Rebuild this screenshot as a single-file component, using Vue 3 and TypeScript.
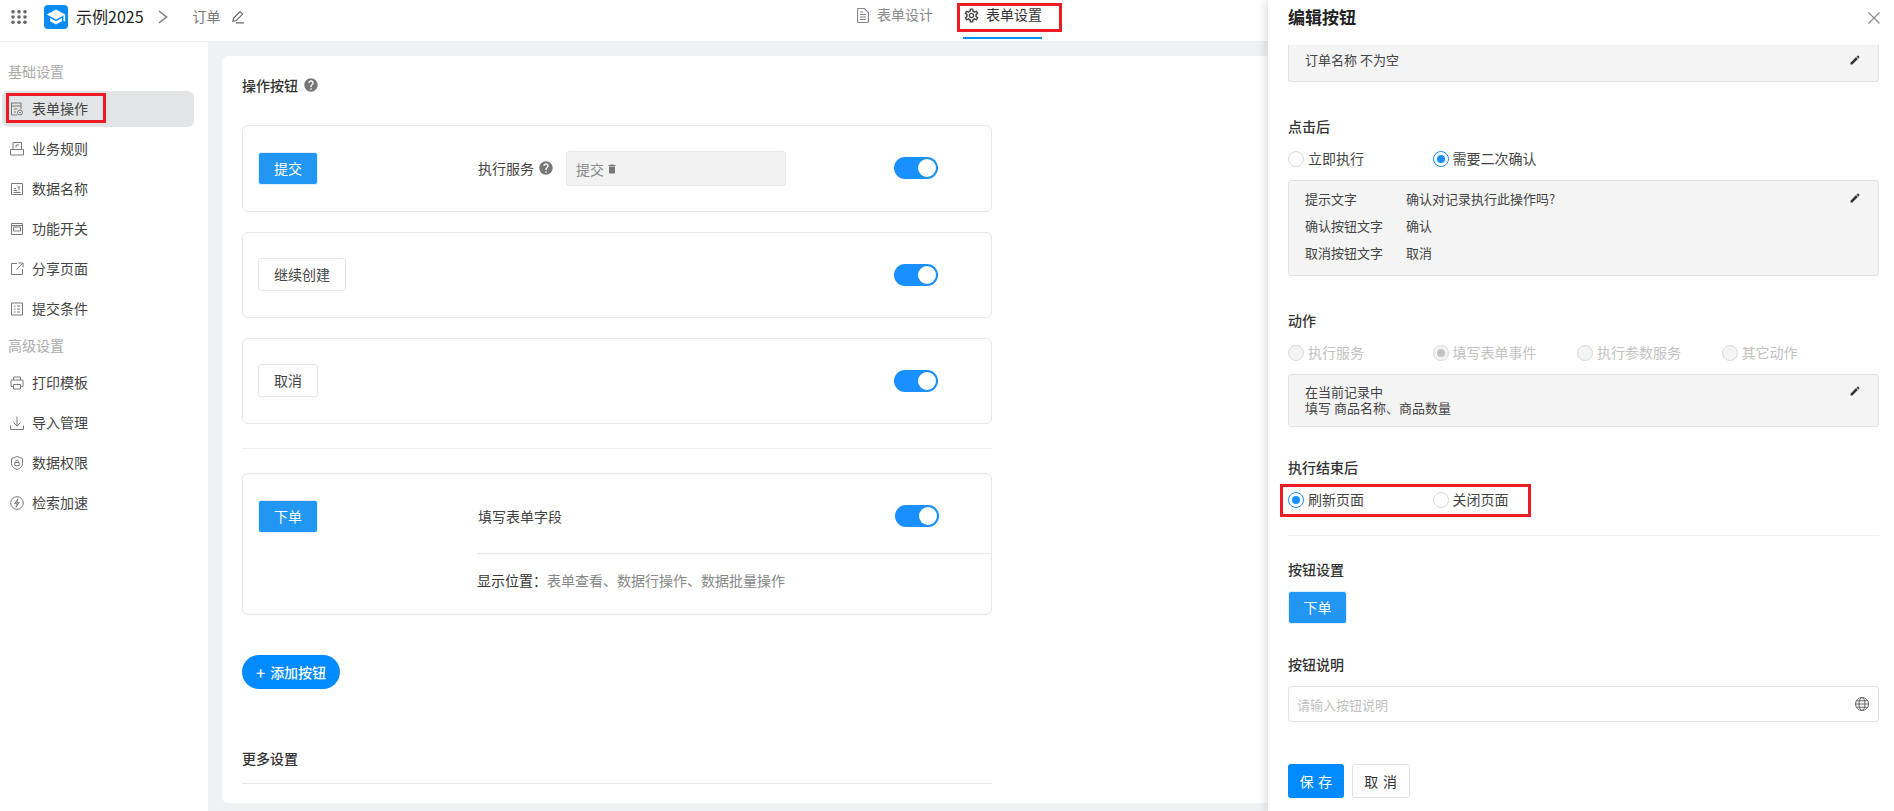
<script setup lang="ts">
import { reactive, ref } from 'vue';

interface NavItem {
  label: string;
  icon: string;
  active?: boolean;
}

const basicNav: NavItem[] = [
  { label: '表单操作', icon: 'M2.5 14V2h9.5v6M2.500 5H12M5 8h3M5 11h2M11 9a2.500 2.500 0 1 0 0 5 2.500 2.500 0 0 0 0-5zM10 11.500h2M2.500 14H8', active: true },
  { label: '业务规则', icon: 'M4 8.500V1.500h8.500v7M1.500 8.500h13v5.500h-13zM7 4h3M7 4v2.500' },
  { label: '数据名称', icon: 'M2.500 2.500h11v11h-11zM4.500 9.500h3.500M5 7.500h2M10 6v3.500M4.500 11.500h7M8.500 6H11' },
  { label: '功能开关', icon: 'M2.500 2.500h11v11h-11zM4.500 6h7v4h-7zM2.500 4.500h11' },
  { label: '分享页面', icon: 'M8 2.500H2.500v11h11V8M9.500 2H14v4.500M14 2L7.500 8.500' },
  { label: '提交条件', icon: 'M2.500 2h11v12h-11zM5 5h1.500M8 5h3M5 8h1.500M8 8h3M5 11h1.500M8 11h3' }
];

const advancedNav: NavItem[] = [
  { label: '打印模板', icon: 'M4.500 5V2h7v3M4.500 11.500H2V5.500a.5.500 0 0 1 .5-.5h11a.5.500 0 0 1 .5.500v6h-2.500M4.500 9.500h7v4.500h-7z' },
  { label: '导入管理', icon: 'M8 1.500v9M4.500 7.500L8 11l3.500-3.500M1.500 10.500v4h13v-4' },
  { label: '数据权限', icon: 'M8 1.500l5.500 2v5c0 3-2.500 5-5.500 6-3-1-5.500-3-5.500-6v-5zM5.800 7.500h4.400v3.200H5.800zM6.800 7.500V6.300a1.200 1.200 0 0 1 2.400 0v1.200' },
  { label: '检索加速', icon: 'M8 1.700a6.300 6.300 0 1 0 0 12.600A6.300 6.300 0 0 0 8 1.700zM9 3.800L5.700 8.600h2.600L7 12.200l3.300-4.800H7.700z' }
];

const toggles = reactive({ submit: true, next: true, cancel: true, order: true });

const afterClick = ref('confirm');
const afterDone = ref('refresh');

const actionOptions = [
  { label: '执行服务', checked: false },
  { label: '填写表单事件', checked: true },
  { label: '执行参数服务', checked: false },
  { label: '其它动作', checked: false }
];

const confirmRows = [
  ['提示文字', '确认对记录执行此操作吗?'],
  ['确认按钮文字', '确认'],
  ['取消按钮文字', '取消']
];

const helpPath = 'M12 2C6.48 2 2 6.48 2 12s4.48 10 10 10 10-4.48 10-10S17.52 2 12 2zm1 17h-2v-2h2v2zm2.07-7.75l-.9.92C13.45 12.9 13 13.5 13 15h-2v-.5c0-1.1.45-2.1 1.17-2.83l1.24-1.26c.37-.36.59-.86.59-1.41 0-1.1-.9-2-2-2s-2 .9-2 2H8c0-2.21 1.79-4 4-4s4 1.79 4 4c0 .88-.36 1.68-.93 2.25z';
const editPath = 'M3 17.25V21h3.75L17.81 9.94l-3.75-3.75L3 17.25zM20.71 7.04c.39-.39.39-1.02 0-1.41l-2.34-2.34c-.39-.39-1.02-.39-1.41 0l-1.83 1.83 3.75 3.75 1.83-1.83z';
</script>

<template>
  <div class="app">
    <header class="topbar">
      <div class="brand">
        <svg class="apps" width="16" height="14" viewBox="0 0 16 14">
          <g fill="#666">
            <circle v-for="c in [2, 8, 14]" :key="'a' + c" :cx="c" cy="1.8" r="1.8" />
            <circle v-for="c in [2, 8, 14]" :key="'b' + c" :cx="c" cy="7" r="1.8" />
            <circle v-for="c in [2, 8, 14]" :key="'c' + c" :cx="c" cy="12.2" r="1.8" />
          </g>
        </svg>
        <span class="logo">
          <svg width="20" height="20" viewBox="0 0 24 24"><path fill="#fff" d="M5 13.18v4L12 21l7-3.82v-4L12 17l-7-3.82zM12 3L1 9l11 6 9-4.91V17h2V9L12 3z" /></svg>
        </span>
        <span class="app-name">示例2025</span>
        <svg class="chevron" width="10" height="14" viewBox="0 0 10 14"><path d="M1 1l7.500 6L1 13" fill="none" stroke="#808080" stroke-width="1.6" /></svg>
        <span class="form-name">订单</span>
        <svg width="14" height="14" viewBox="0 0 13 13"><path d="M8.500 1.500l2.300 2.300-6 6-3 .7.7-3zM4.500 12h7.500" fill="none" stroke="#666" stroke-width="1.1" /></svg>
      </div>
      <nav class="tabs">
        <div class="tab">
          <svg width="12" height="15" viewBox="0 0 12 15"><path d="M1.500.5h6l4 4v8.500a1.500 1.500 0 0 1-1.500 1.500H1.500a1 1 0 0 1-1-1V1.500a1 1 0 0 1 1-1zM3 6.500h6M3 9h6M3 11.500h6M3 4h3" fill="none" stroke="#888" stroke-width="1.2" /></svg>
          <span>表单设计</span>
        </div>
        <div class="tab tab-active">
          <svg width="17" height="17" viewBox="0 0 24 24"><path fill="#444" d="M19.43 12.98c.04-.32.07-.64.07-.98 0-.34-.03-.66-.07-.98l2.11-1.65c.19-.15.24-.42.12-.64l-2-3.46c-.09-.16-.26-.25-.44-.25-.06 0-.12.01-.17.03l-2.49 1c-.52-.4-1.08-.73-1.69-.98l-.38-2.65C14.46 2.18 14.25 2 14 2h-4c-.25 0-.46.18-.49.42l-.38 2.65c-.61.25-1.17.59-1.69.98l-2.49-1c-.06-.02-.12-.03-.18-.03-.17 0-.34.09-.43.25l-2 3.46c-.13.22-.07.49.12.64l2.11 1.65c-.04.32-.07.65-.07.98 0 .33.03.66.07.98l-2.11 1.65c-.19.15-.24.42-.12.64l2 3.46c.09.16.26.25.44.25.06 0 .12-.01.17-.03l2.49-1c.52.4 1.08.73 1.69.98l.38 2.65c.03.24.24.42.49.42h4c.25 0 .46-.18.49-.42l.38-2.65c.61-.25 1.17-.59 1.69-.98l2.49 1c.06.02.12.03.18.03.17 0 .34-.09.43-.25l2-3.46c.12-.22.07-.49-.12-.64l-2.11-1.65zm-1.98-1.71c.04.31.05.52.05.73 0 .21-.02.43-.05.73l-.14 1.13.89.7 1.08.84-.7 1.21-1.27-.51-1.04-.42-.9.68c-.43.32-.84.56-1.25.73l-1.06.43-.16 1.13-.2 1.35h-1.4l-.19-1.35-.16-1.13-1.06-.43c-.43-.18-.83-.41-1.23-.71l-.91-.7-1.06.43-1.27.51-.7-1.21 1.08-.84.89-.7-.14-1.13c-.03-.31-.05-.54-.05-.74s.02-.43.05-.73l.14-1.13-.89-.7-1.08-.84.7-1.21 1.27.51 1.04.42.9-.68c.43-.32.84-.56 1.25-.73l1.06-.43.16-1.13.2-1.35h1.39l.19 1.35.16 1.13 1.06.43c.43.18.83.41 1.23.71l.91.7 1.06-.43 1.27-.51.7 1.21-1.07.85-.89.7.14 1.13zM12 8c-2.21 0-4 1.79-4 4s1.79 4 4 4 4-1.79 4-4-1.79-4-4-4zm0 6c-1.1 0-2-.9-2-2s.9-2 2-2 2 .9 2 2-.9 2-2 2z" /></svg>
          <span>表单设置</span>
          <i class="mark mark-tab"></i>
        </div>
      </nav>
    </header>

    <div class="body">
      <aside class="sidebar">
        <div class="nav-title">基础设置</div>
        <div v-for="item in basicNav" :key="item.label" class="nav-item" :class="{ active: item.active }">
          <svg width="16" height="16" viewBox="0 0 16 16"><path :d="item.icon" fill="none" stroke="#7a7a7a" stroke-width="1" /></svg>
          <span>{{ item.label }}</span>
          <i v-if="item.active" class="mark mark-nav"></i>
        </div>
        <div class="nav-title">高级设置</div>
        <div v-for="item in advancedNav" :key="item.label" class="nav-item">
          <svg width="16" height="16" viewBox="0 0 16 16"><path :d="item.icon" fill="none" stroke="#7a7a7a" stroke-width="1" /></svg>
          <span>{{ item.label }}</span>
        </div>
      </aside>

      <main class="content">
        <div class="card">
          <div class="column">
            <h3 class="card-title">
              操作按钮
              <svg width="16" height="16" viewBox="0 0 24 24"><path fill="#777" :d="helpPath" /></svg>
            </h3>

            <div class="op-row">
              <div class="op-left"><button class="btn btn-blue">提交</button></div>
              <div class="op-middle">
                <span>执行服务</span>
                <svg class="help" width="16" height="16" viewBox="0 0 24 24"><path fill="#777" :d="helpPath" /></svg>
                <div class="service-field">
                  提交
                  <svg width="12" height="12" viewBox="0 0 24 24"><path fill="#777" d="M6 19c0 1.100.9 2 2 2h8c1.100 0 2-.9 2-2V7H6v12zM19 4h-3.500l-1-1h-5l-1 1H5v2h14V4z" /></svg>
                </div>
              </div>
              <span class="switch" :class="{ on: toggles.submit }" @click="toggles.submit = !toggles.submit"></span>
            </div>

            <div class="op-row">
              <div class="op-left"><button class="btn">继续创建</button></div>
              <div class="op-middle"></div>
              <span class="switch" :class="{ on: toggles.next }" @click="toggles.next = !toggles.next"></span>
            </div>

            <div class="op-row">
              <div class="op-left"><button class="btn">取消</button></div>
              <div class="op-middle"></div>
              <span class="switch" :class="{ on: toggles.cancel }" @click="toggles.cancel = !toggles.cancel"></span>
            </div>

            <div class="rule"></div>

            <div class="op-card">
              <div class="op-left"><button class="btn btn-blue">下单</button></div>
              <div class="op-detail">
                <div class="op-detail-top">
                  <span>填写表单字段</span>
                  <span class="switch" :class="{ on: toggles.order }" @click="toggles.order = !toggles.order"></span>
                </div>
                <div class="op-detail-bottom">显示位置：<span class="muted">表单查看、数据行操作、数据批量操作</span></div>
              </div>
            </div>

            <button class="add-btn"><span class="plus">+</span>添加按钮</button>

            <h3 class="more-title">更多设置</h3>
          </div>
        </div>
      </main>
    </div>

    <section class="drawer">
      <div class="drawer-head">
        <h2>编辑按钮</h2>
        <svg class="close" width="14" height="14" viewBox="0 0 14 14"><path d="M1.500 1.500l11 11M12.500 1.500l-11 11" stroke="#888" stroke-width="1.1" fill="none" /></svg>
      </div>
      <div class="drawer-body">
        <div class="info-box clipped">
          订单名称 不为空
          <svg class="edit" width="12" height="12" viewBox="0 0 24 24"><path fill="#333" :d="editPath" /></svg>
        </div>

        <h4 class="sec sec-first">点击后</h4>
        <div class="radios">
          <label class="radio" @click="afterClick = 'now'"><i class="dot" :class="{ checked: afterClick === 'now' }"></i>立即执行</label>
          <label class="radio" @click="afterClick = 'confirm'"><i class="dot" :class="{ checked: afterClick === 'confirm' }"></i>需要二次确认</label>
        </div>
        <div class="info-box confirm-box">
          <div v-for="row in confirmRows" :key="row[0]" class="confirm-row">
            <span class="confirm-label">{{ row[0] }}</span><span>{{ row[1] }}</span>
          </div>
          <svg class="edit" width="12" height="12" viewBox="0 0 24 24"><path fill="#333" :d="editPath" /></svg>
        </div>

        <h4 class="sec sec-action">动作</h4>
        <div class="radios">
          <label v-for="opt in actionOptions" :key="opt.label" class="radio disabled"><i class="dot" :class="{ checked: opt.checked }"></i>{{ opt.label }}</label>
        </div>
        <div class="info-box action-box">
          在当前记录中<br />填写 商品名称、商品数量
          <svg class="edit" width="12" height="12" viewBox="0 0 24 24"><path fill="#333" :d="editPath" /></svg>
        </div>

        <h4 class="sec sec-done">执行结束后</h4>
        <div class="radios done-radios">
          <label class="radio" @click="afterDone = 'refresh'"><i class="dot" :class="{ checked: afterDone === 'refresh' }"></i>刷新页面</label>
          <label class="radio" @click="afterDone = 'close'"><i class="dot" :class="{ checked: afterDone === 'close' }"></i>关闭页面</label>
          <i class="mark mark-radios"></i>
        </div>
        <div class="drawer-rule"></div>

        <h4 class="sec sec-btn">按钮设置</h4>
        <button class="btn btn-blue preview-btn">下单</button>

        <h4 class="sec sec-desc">按钮说明</h4>
        <div class="desc-input">
          <input type="text" placeholder="请输入按钮说明" />
          <svg width="16" height="16" viewBox="0 0 16 16"><g fill="none" stroke="#666" stroke-width="1"><circle cx="8" cy="8" r="6.500" /><ellipse cx="8" cy="8" rx="3" ry="6.500" /><path d="M1.500 8h13M2.500 4.800h11M2.500 11.200h11" /></g></svg>
        </div>

        <div class="drawer-foot">
          <button class="foot-btn primary"><span>保存</span></button>
          <button class="foot-btn"><span>取消</span></button>
        </div>
      </div>
    </section>
  </div>
</template>

<style>
html,
body {
  margin: 0;
  background: #fff;
}
</style>

<style scoped>
.app {
  position: relative;
  display: flex;
  flex-direction: column;
  height: 811px;
  overflow: hidden;
  font-family: "Noto Sans CJK SC", "Liberation Sans", sans-serif;
  font-size: 14px;
  color: #444;
}

.topbar {
  display: flex;
  flex: none;
  height: 42px;
  box-sizing: border-box;
  background: #fff;
  border-bottom: 1px solid #eee;
}

.brand {
  display: flex;
  align-items: center;
  flex: none;
  width: 857px;
  height: 34px;
  box-sizing: border-box;
  padding-left: 11px;
}

.logo {
  display: flex;
  align-items: center;
  justify-content: center;
  width: 24px;
  height: 24px;
  margin-left: 17px;
  border-radius: 4px;
  background: #0a8cf2;
}

.app-name {
  margin-left: 8px;
  margin-top: -2px;
  font-size: 16px;
  line-height: 22px;
  color: #222;
}

.chevron {
  margin-left: 14px;
}

.form-name {
  margin: -2px 10px 0 25px;
  color: #777;
  line-height: 20px;
}

.tabs {
  display: flex;
  gap: 30px;
}

.tab {
  position: relative;
  display: flex;
  align-items: center;
  gap: 8px;
  align-self: flex-start;
  height: 30px;
  line-height: 30px;
  color: #888;
}

.tab span {
  margin-top: -2px;
}

.tab-active {
  gap: 6px;
  height: 39px;
  box-sizing: border-box;
  padding-bottom: 7px;
  border-bottom: 2px solid #008aff;
  color: #333;
}

.mark {
  position: absolute;
  box-sizing: border-box;
  border: 3px solid #ed1c24;
  pointer-events: none;
}

.mark-tab {
  left: -6px;
  top: 3px;
  width: 105px;
  height: 29px;
}

.body {
  display: flex;
  flex: 1;
  min-height: 0;
}

.sidebar {
  flex: none;
  width: 208px;
  box-sizing: border-box;
  padding: 20px 14px 0 2px;
  background: #fff;
}

.nav-title {
  margin-bottom: 11px;
  padding-left: 6px;
  line-height: 18px;
  color: #aaa;
}

.nav-item {
  position: relative;
  display: flex;
  align-items: center;
  gap: 7px;
  height: 36px;
  margin-bottom: 4px;
  padding-left: 7px;
  border-radius: 6px;
  line-height: 20px;
  color: #444;
}

.nav-item span {
  margin-top: -2px;
}

.nav-item + .nav-title {
  margin-top: 9px;
}

.nav-item.active {
  background: #e3e4e6;
}

.mark-nav {
  left: 4px;
  top: 2px;
  width: 100px;
  height: 30px;
}

.content {
  flex: 1;
  box-sizing: border-box;
  padding: 14px 0 8px 14px;
  background: #f0f1f3;
}

.card {
  height: 100%;
  box-sizing: border-box;
  padding: 20px 20px 0;
  border-radius: 6px;
  background: #fff;
}

.column {
  width: 750px;
}

.card-title {
  display: flex;
  align-items: center;
  gap: 5px;
  height: 20px;
  box-sizing: border-box;
  margin: 0 0 29px;
  padding-bottom: 2px;
  font-size: 14px;
  font-weight: 500;
  line-height: 18px;
  color: #333;
}

.op-row {
  display: flex;
  align-items: center;
  margin-bottom: 20px;
  padding: 25px 0 26px;
  border: 1px solid #e6e6e6;
  border-radius: 6px;
}

.op-left {
  flex: none;
  width: 235px;
  box-sizing: border-box;
  padding-left: 15px;
}

.op-middle {
  display: flex;
  align-items: center;
  flex: none;
  width: 416px;
  color: #444;
}

.help {
  margin-left: 4px;
}

.service-field {
  display: flex;
  align-items: center;
  gap: 2px;
  width: 220px;
  height: 35px;
  box-sizing: border-box;
  margin: 0 0 -1px 12px;
  padding-left: 9px;
  border: 1px solid #e6e6e6;
  border-radius: 3px;
  background: #f2f2f2;
  color: #888;
}

.btn {
  height: 33px;
  box-sizing: border-box;
  padding: 0 15px 1px;
  border: 1px solid #e6e6e6;
  border-radius: 3px;
  background: #fff;
  font: inherit;
  line-height: 20px;
  white-space: nowrap;
  color: #444;
}

.btn-blue {
  border-color: #e3eefa;
  background: #2196f3;
  color: #fff;
}

.switch {
  position: relative;
  display: block;
  flex: none;
  width: 44px;
  height: 22px;
  border-radius: 11px;
  background: #ccc;
}

.switch::after {
  content: "";
  position: absolute;
  top: 2px;
  left: 2px;
  width: 18px;
  height: 18px;
  border-radius: 50%;
  background: #fff;
}

.switch.on {
  background: #1890ff;
}

.switch.on::after {
  left: 24px;
}

.rule {
  height: 1px;
  margin: 24px 0;
  background: #eee;
}

.op-card {
  display: flex;
  height: 142px;
  box-sizing: border-box;
  border: 1px solid #e6e6e6;
  border-radius: 6px;
}

.op-card .op-left {
  padding-top: 26px;
}

.op-detail {
  flex: 1;
  margin-left: -1px;
}

.op-detail-top {
  display: flex;
  align-items: center;
  justify-content: space-between;
  height: 80px;
  box-sizing: border-box;
  padding: 26px 52px 22px 1px;
  border-bottom: 1px solid #e6e6e6;
  line-height: 20px;
}

.op-detail-bottom {
  padding-top: 16px;
  line-height: 20px;
  color: #333;
}

.muted {
  color: #888;
}

.add-btn {
  display: flex;
  align-items: center;
  height: 34px;
  margin-top: 40px;
  padding: 0 14px;
  border: none;
  border-radius: 17px;
  background: #008aff;
  font: inherit;
  font-weight: 500;
  white-space: nowrap;
  color: #fff;
}

.plus {
  margin-right: 5px;
  font-size: 16px;
  line-height: 20px;
}

.more-title {
  height: 35px;
  box-sizing: border-box;
  margin: 60px 0 0;
  border-bottom: 1px solid #e6e6e6;
  font-size: 14px;
  font-weight: 500;
  line-height: 19px;
  color: #333;
}

.drawer {
  position: absolute;
  top: 0;
  right: 0;
  bottom: 0;
  width: 626px;
  background: #fff;
  box-shadow: -3px 0 8px rgba(0, 0, 0, 0.12);
}

.drawer-head {
  display: flex;
  align-items: center;
  justify-content: space-between;
  height: 45px;
  box-sizing: border-box;
  padding: 0 13px 11px 20px;
}

.drawer-head h2 {
  margin: 0;
  font-size: 17px;
  font-weight: 700;
  line-height: 24px;
  color: #222;
}

.close {
  margin-top: 2px;
}

.drawer-body {
  padding: 0 15px 0 20px;
}

.info-box {
  position: relative;
  box-sizing: border-box;
  padding: 0 16px;
  border: 1px solid #e2e2e2;
  border-radius: 3px;
  background: #f4f4f5;
  font-size: 13px;
  color: #444;
}

.clipped {
  height: 37px;
  padding-top: 6px;
  border-top: none;
  border-radius: 0 0 3px 3px;
  line-height: 18px;
}

.edit {
  position: absolute;
  right: 17px;
  top: 10px;
}

.clipped .edit {
  top: 9px;
}

.confirm-box .edit {
  top: 11px;
}

.sec {
  margin: 0;
  padding-bottom: 2px;
  font-size: 14px;
  font-weight: 500;
  line-height: 18px;
  color: #333;
}

.sec-first {
  margin-top: 35px;
}

.sec-action {
  margin-top: 35px;
}

.sec-done {
  margin-top: 31px;
}

.sec-btn {
  margin-top: 24px;
}

.sec-desc {
  margin-top: 31px;
}

.radios {
  position: relative;
  display: flex;
  height: 20px;
  margin-top: 12px;
}

.radio {
  display: flex;
  align-items: flex-start;
  width: 144.5px;
  line-height: 18px;
  color: #444;
}

.radio.disabled {
  color: #c2c2c2;
}

.dot {
  position: relative;
  flex: none;
  width: 16px;
  height: 16px;
  box-sizing: border-box;
  margin: 2px 4px 0 0;
  border: 1px solid #d9d9d9;
  border-radius: 50%;
  background: #fff;
}

.dot.checked {
  border-color: #1890ff;
}

.dot.checked::after {
  content: "";
  position: absolute;
  top: 3px;
  left: 3px;
  width: 8px;
  height: 8px;
  border-radius: 50%;
  background: #1890ff;
}

.radio.disabled .dot {
  border-color: #d9d9d9;
  background: #f4f4f4;
}

.radio.disabled .dot.checked::after {
  background: #c2c2c2;
}

.confirm-box {
  height: 96px;
  margin-top: 11px;
  padding-top: 4px;
}

.confirm-row {
  display: flex;
  line-height: 27px;
}

.confirm-label {
  width: 101px;
}

.action-box {
  height: 53px;
  margin-top: 11px;
  padding-top: 9px;
  line-height: 16px;
}

.mark-radios {
  left: -8px;
  top: -6px;
  width: 251px;
  height: 33px;
}

.drawer-rule {
  height: 1px;
  margin-top: 25px;
  background: #eee;
}

.preview-btn {
  display: block;
  width: 59px;
  margin-top: 11px;
  padding: 0 0 1px;
}

.desc-input {
  display: flex;
  align-items: center;
  height: 36px;
  box-sizing: border-box;
  margin-top: 11px;
  padding: 0 8px;
  border: 1px solid #e2e2e2;
  border-radius: 3px;
}

.desc-input input {
  flex: 1;
  min-width: 0;
  padding: 0;
  border: none;
  outline: none;
  background: none;
  font: inherit;
  font-size: 13px;
  color: #444;
}

.desc-input input::placeholder {
  color: #bfbfbf;
}

.drawer-foot {
  display: flex;
  gap: 8px;
  margin-top: 42px;
}

.foot-btn {
  height: 34px;
  box-sizing: border-box;
  padding: 0 11.5px;
  border: 1px solid #e2e2e2;
  border-radius: 3px;
  background: #fff;
  font: inherit;
  white-space: nowrap;
  color: #333;
}

.foot-btn span {
  margin-right: -0.34em;
  letter-spacing: 0.34em;
}

.foot-btn.primary {
  border: none;
  background: #008aff;
  color: #fff;
}
</style>
